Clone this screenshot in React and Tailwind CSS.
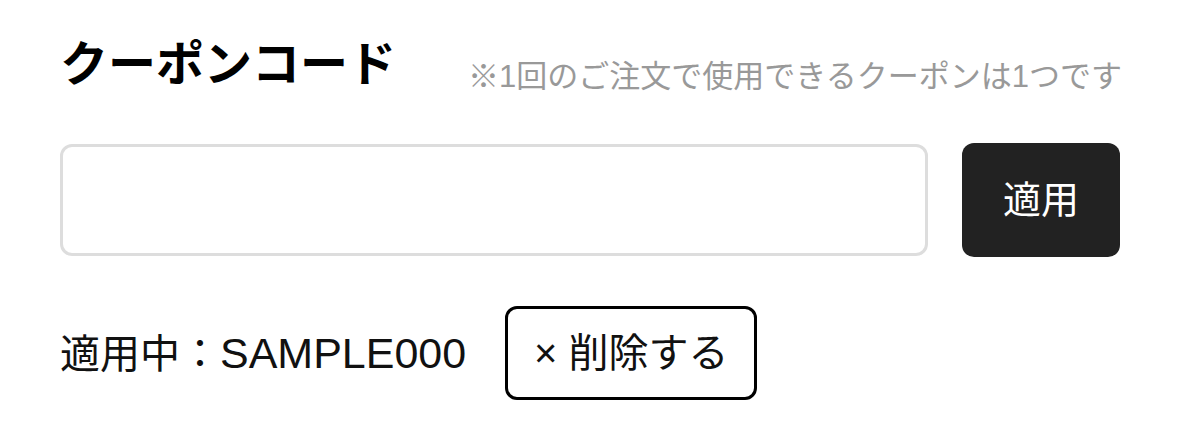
import React from 'react';

export default function App() {
  return (
    <div
      className="w-[1179px] h-[433px] bg-white px-[60px] pt-[29px]"
      style={{ fontFamily: '"Liberation Sans", "Noto Sans CJK JP", sans-serif' }}
    >
      <div className="flex items-baseline whitespace-nowrap">
        <h2 className="shrink-0 text-[48px] leading-[72px] font-bold text-black">クーポンコード</h2>
        <p className="ml-[72px] shrink-0 translate-y-[6px] text-[31px] text-[#999999]">※1回のご注文で使用できるクーポンは1つです</p>
      </div>

      <div className="mt-[42px] flex items-center gap-[34px]">
        <input
          type="text"
          className="h-[112px] w-[868px] shrink-0 rounded-[12px] border-[3px] border-[#dddddd] bg-white px-4 text-[32px] outline-none"
        />
        <button className="h-[114px] w-[158px] shrink-0 rounded-[12px] bg-[#222222] text-[38px] text-white">
          適用
        </button>
      </div>

      <div className="mt-[49px] flex items-center whitespace-nowrap">
        <span className="text-[40px] text-[#111111]">
          適用中：<span className="text-[43px]">SAMPLE000</span>
        </span>
        <button className="ml-[39px] h-[94px] w-[252px] shrink-0 rounded-[12px] border-[3px] border-black bg-white text-[40px] text-[#111111]">
          × 削除する
        </button>
      </div>
    </div>
  );
}
